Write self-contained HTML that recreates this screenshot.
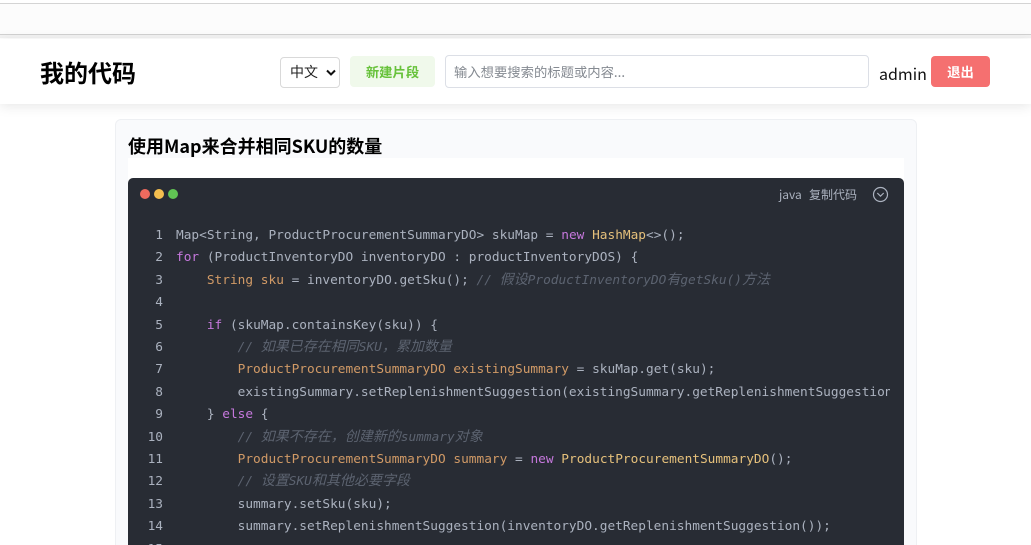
<!DOCTYPE html>
<html><head><meta charset="utf-8">
<style>
html,body{margin:0;padding:0;width:1031px;height:545px;overflow:hidden;background:#fff;}
#root{position:relative;width:1031px;height:545px;overflow:hidden;background:#fff;font-family:"Noto Sans CJK SC","Liberation Sans",sans-serif;}
.a{position:absolute;white-space:nowrap;}
#top{left:0;top:0;width:1031px;height:3px;background:#fff;border-bottom:1px solid #d4d4d4;}
#bar{left:0;top:4px;width:1031px;height:30px;background:#fcfcfc;border-bottom:1px solid #d2d2d2;}
#strip{left:0;top:35px;width:1031px;height:3px;background:#f3f3f3;}
#hdr{left:0;top:39px;width:1031px;height:65px;background:#fff;box-shadow:0 2px 12px rgba(0,0,0,.1);z-index:2;}
#logo{left:40px;top:55px;font-size:24px;line-height:34px;font-weight:700;color:#000;z-index:3;}
#sel{left:280px;top:57px;width:58px;height:29px;border:1px solid #d9d9d9;border-radius:4px;background:#fff;z-index:3;font-size:14px;line-height:29px;color:#222;}
#sel span{position:absolute;left:9px;top:0;}
#btn{left:350px;top:56px;width:85px;height:31px;background:#f0f9eb;border-radius:4px;color:#67c23a;font-size:13.33px;font-weight:700;line-height:32px;text-align:center;z-index:3;}
#inp{left:445px;top:55px;width:422px;height:31px;border:1px solid #dcdfe6;border-radius:4px;background:#fff;z-index:3;font-size:13.33px;line-height:31px;color:#858a91;text-indent:8px;}
#adm{left:879px;top:60px;font-size:16px;line-height:26px;color:#111;z-index:3;}
#out{left:931px;top:56px;width:59px;height:31px;background:#f56c6c;opacity:.97;border-radius:4px;color:#fff;font-size:13.33px;font-weight:700;line-height:32px;text-align:center;z-index:3;}
#card{left:115px;top:119px;width:800px;height:440px;background:#f9fafc;border:1px solid #eef0f3;border-radius:6px;}
#ttl{left:128px;top:133px;font-size:18px;line-height:27px;font-weight:700;color:#000;}
#white{left:128px;top:158px;width:776px;height:30px;background:#fff;}
#code{left:128px;top:178px;width:776px;height:380px;background:#282c34;border-radius:5px 5px 0 0;overflow:hidden;}
.d{position:absolute;top:11px;width:10px;height:10px;border-radius:50%;}
#lang{left:651px;top:8px;font-size:12px;line-height:18px;color:#abb2bf;}
#cp{left:681px;top:8px;font-size:12px;line-height:18px;color:#abb2bf;}
#pre{position:absolute;left:48px;top:47px;width:714px;overflow:hidden;font-family:"DejaVu Sans Mono","Noto Sans CJK SC",monospace;font-size:12.8px;line-height:22.4px;color:#abb2bf;white-space:pre;}
#num{position:absolute;left:0;top:47px;width:35px;text-align:right;font-family:"DejaVu Sans Mono",monospace;font-size:12.8px;line-height:22.4px;color:#abb2bf;white-space:pre;}
.k{color:#c678dd}.t{color:#d19a66}.n{color:#e5c07b}.c{color:#5c6370;font-style:italic}
.z{font-size:14px;line-height:0;font-family:"Noto Sans CJK SC",sans-serif;}
</style></head><body>
<div id="root">
<div class="a" id="top"></div>
<div class="a" id="bar"></div>
<div class="a" id="strip"></div>
<div class="a" id="hdr"></div>
<div class="a" id="logo">我的代码</div>
<div class="a" id="sel"><span>中文</span><svg style="position:absolute;left:45px;top:11px" width="10" height="8" viewBox="0 0 10 8"><path d="M1 1.5 L5 5.5 L9 1.5" fill="none" stroke="#111" stroke-width="2"/></svg></div>
<div class="a" id="btn">新建片段</div>
<div class="a" id="inp">输入想要搜索的标题或内容...</div>
<div class="a" id="adm">admin</div>
<div class="a" id="out">退出</div>
<div class="a" id="card"></div>
<div class="a" id="ttl">使用Map来合并相同SKU的数量</div>
<div class="a" id="white"></div>
<div class="a" id="code">
<div class="d" style="left:12px;background:#ed6a5e"></div>
<div class="d" style="left:26px;background:#f4bf4f"></div>
<div class="d" style="left:40px;background:#61c554"></div>
<div class="a" id="lang">java</div>
<div class="a" id="cp">复制代码</div>
<svg style="position:absolute;left:744px;top:8px" width="17" height="17" viewBox="0 0 17 17"><circle cx="8.5" cy="8.5" r="7" fill="none" stroke="#abb2bf" stroke-width="1.2"/><path d="M5.3 7 L8.5 10.2 L11.7 7" fill="none" stroke="#abb2bf" stroke-width="1.2"/></svg>
<div id="num">1
2
3
4
5
6
7
8
9
10
11
12
13
14
15</div>
<div id="pre">Map&lt;String, ProductProcurementSummaryDO&gt; skuMap = <span class="k">new</span> <span class="n">HashMap</span>&lt;&gt;();
<span class="k">for</span> (ProductInventoryDO inventoryDO : productInventoryDOS) {
    <span class="t">String</span> <span class="t">sku</span> = inventoryDO.getSku(); <span class="c">// <span class="z">假设</span>ProductInventoryDO<span class="z">有</span>getSku()<span class="z">方法</span></span>

    <span class="k">if</span> (skuMap.containsKey(sku)) {
        <span class="c">// <span class="z">如果已存在相同</span>SKU<span class="z">，累加数量</span></span>
        <span class="t">ProductProcurementSummaryDO</span> <span class="t">existingSummary</span> = skuMap.get(sku);
        existingSummary.setReplenishmentSuggestion(existingSummary.getReplenishmentSuggestion() + inventoryDO.getReplenishmentSuggestion());
    } <span class="k">else</span> {
        <span class="c">// <span class="z">如果不存在，创建新的</span>summary<span class="z">对象</span></span>
        <span class="t">ProductProcurementSummaryDO</span> <span class="t">summary</span> = <span class="k">new</span> <span class="n">ProductProcurementSummaryDO</span>();
        <span class="c">// <span class="z">设置</span>SKU<span class="z">和其他必要字段</span></span>
        summary.setSku(sku);
        summary.setReplenishmentSuggestion(inventoryDO.getReplenishmentSuggestion());
</div>
</div>
</div>
</body></html>
